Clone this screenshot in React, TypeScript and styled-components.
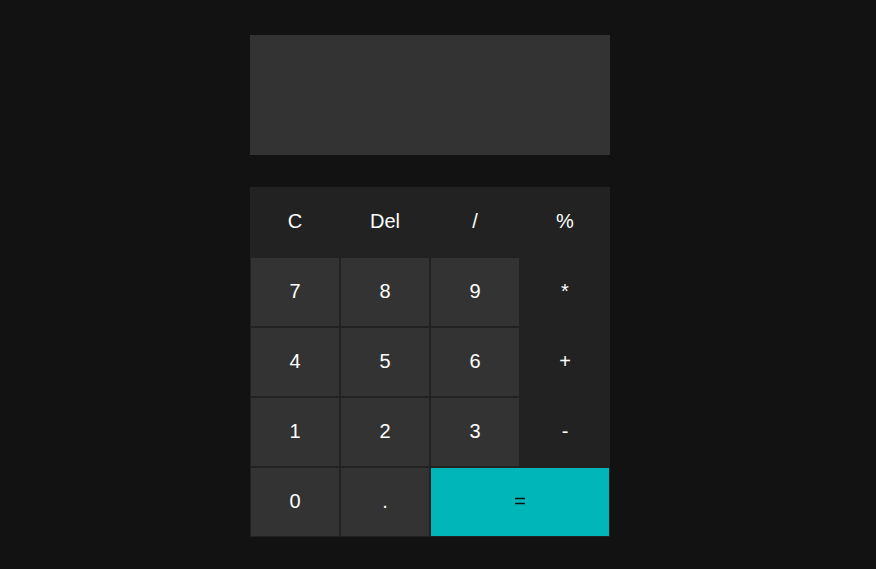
import React from "react";
import styled, { createGlobalStyle } from "styled-components";

const Global = createGlobalStyle`
  html, body { margin: 0; padding: 0; background: #121212; }
  body { font-family: "Liberation Sans", Arial, sans-serif; }
`;

const Page = styled.div`
  display: flex;
  justify-content: center;
  padding: 35px 16px 0 0;
`;

const Calculator = styled.div`
  width: 360px;
  display: flex;
  flex-direction: column;
  gap: 32px;
`;

const Display = styled.div`
  height: 120px;
  background: #333333;
  color: #fff;
  display: flex;
  align-items: flex-end;
  justify-content: flex-end;
  font-size: 32px;
  box-sizing: border-box;
  padding: 10px;
`;

const Keypad = styled.div`
  display: grid;
  grid-template-columns: repeat(4, 90px);
  grid-auto-rows: 70px;
  background: #222222;
`;

type Kind = "op" | "num" | "eq";

const Key = styled.button<{ $kind: Kind; $span?: number }>`
  grid-column: span ${(p) => p.$span ?? 1};
  border: 1px solid #222222;
  margin: 0;
  padding: 0 0 2px 0;
  font-family: "Liberation Sans", Arial, sans-serif;
  font-size: 20px;
  cursor: pointer;
  background: ${(p) =>
    p.$kind === "op" ? "#222222" : p.$kind === "eq" ? "#00b6b9" : "#333333"};
  color: ${(p) => (p.$kind === "eq" ? "#111111" : "#ffffff")};
  display: flex;
  align-items: center;
  justify-content: center;
`;

const keys: { label: string; kind: Kind; span?: number }[] = [
  { label: "C", kind: "op" },
  { label: "Del", kind: "op" },
  { label: "/", kind: "op" },
  { label: "%", kind: "op" },
  { label: "7", kind: "num" },
  { label: "8", kind: "num" },
  { label: "9", kind: "num" },
  { label: "*", kind: "op" },
  { label: "4", kind: "num" },
  { label: "5", kind: "num" },
  { label: "6", kind: "num" },
  { label: "+", kind: "op" },
  { label: "1", kind: "num" },
  { label: "2", kind: "num" },
  { label: "3", kind: "num" },
  { label: "-", kind: "op" },
  { label: "0", kind: "num" },
  { label: ".", kind: "num" },
  { label: "=", kind: "eq", span: 2 },
];

export default function App() {
  return (
    <>
      <Global />
      <Page>
        <Calculator>
          <Display />
          <Keypad>
            {keys.map((k) => (
              <Key key={k.label} $kind={k.kind} $span={k.span}>
                {k.label}
              </Key>
            ))}
          </Keypad>
        </Calculator>
      </Page>
    </>
  );
}
